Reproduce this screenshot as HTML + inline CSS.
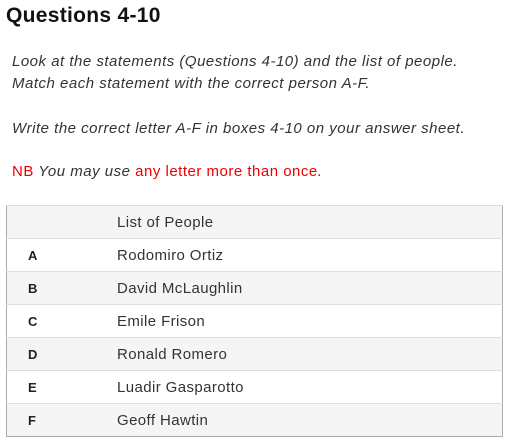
<!DOCTYPE html>
<html><head><style>
body{margin:0;background:#fff;font-family:"Liberation Sans",sans-serif;color:#222;width:510px;height:444px;overflow:hidden}
h2{position:absolute;left:6px;top:4px;margin:0;font-size:21px;letter-spacing:0.3px;font-weight:bold;color:#111}
.p{position:absolute;left:12px;font-size:15px;letter-spacing:0.5px;line-height:22px;font-style:italic;color:#333;margin:0}
.r{color:#e00;font-style:normal}
table{position:absolute;left:6px;top:205px;width:497px;border-collapse:collapse;border:1px solid #aaa;font-size:15px;letter-spacing:0.4px}
td{height:32px;border-top:1px solid #ddd;padding:0;color:#333}
td:first-child{width:89px;padding-left:21px;font-weight:bold;font-size:13px;color:#222}
tr:nth-child(odd){background:#f5f5f5}
</style></head><body>
<h2>Questions 4-10</h2>
<p class="p" style="top:51px">Look at the statements (Questions 4-10) and the list of people.<br>Match each statement with the correct person A-F.</p>
<p class="p" style="top:118px">Write the correct letter A-F in boxes 4-10 on your answer sheet.</p>
<p class="p" style="top:161px"><span class="r">NB</span> You may use <span class="r">any letter more than once</span>.</p>
<table>
<tr><td></td><td>List of People</td></tr>
<tr><td>A</td><td>Rodomiro Ortiz</td></tr>
<tr><td>B</td><td>David McLaughlin</td></tr>
<tr><td>C</td><td>Emile Frison</td></tr>
<tr><td>D</td><td>Ronald Romero</td></tr>
<tr><td>E</td><td>Luadir Gasparotto</td></tr>
<tr><td>F</td><td>Geoff Hawtin</td></tr>
</table>
</body></html>
